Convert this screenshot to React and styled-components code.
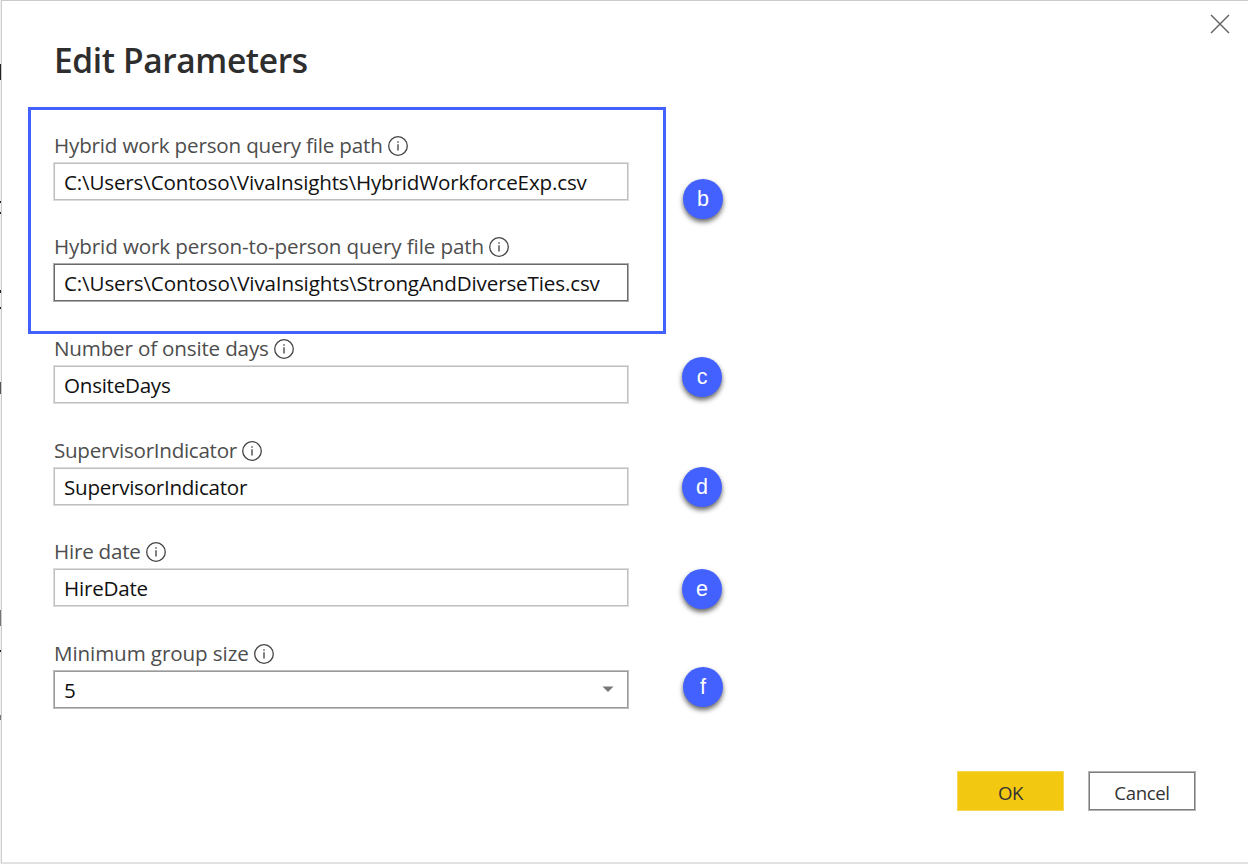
import React from "react";
import styled, { createGlobalStyle } from "styled-components";

const Global = createGlobalStyle`
  * { box-sizing: border-box; }
  body { margin: 0; background: #fff; font-family: "Open Sans", "Noto Sans", sans-serif; }
`;
const Page = styled.div`
  display: flex;
  position: relative;
  width: 1248px;
  height: 867px;
  overflow: hidden;
  background: #fff;
`;
const Backdrop = styled.div`
  width: 1px;
  height: 864px;
  background: #f0f0f0;
`;
const Fragment = styled.i`
  position: absolute;
  left: 0;
  width: 1px;
  top: ${(p) => p.$y}px;
  height: ${(p) => p.$h}px;
  background: ${(p) => p.$c || "#222"};
`;
const Dialog = styled.section`
  display: flex;
  flex-direction: column;
  flex: 1;
  height: 864px;
  border: solid #cbcbcb;
  border-width: 1px 0 2px 1px;
  border-bottom-color: #e1e1e1;
`;
const Header = styled.header`
  display: flex;
  justify-content: space-between;
  height: 106px;
  padding: 13px 18px 0 52px;
`;
const Title = styled.h1`
  margin: 23px 0 0;
  font-size: 33.5px;
  line-height: 47px;
  font-weight: 600;
  letter-spacing: -0.38px;
  color: #2e2e2e;
  white-space: nowrap;
`;
const CloseButton = styled.button`
  width: 20px;
  height: 20px;
  padding: 0;
  border: 0;
  background: none;
  svg { display: block; }
`;
const Body = styled.main`
  display: flex;
  flex: 1;
`;
const Form = styled.form`
  display: flex;
  flex-direction: column;
  width: 638px;
  margin-left: 26px;
`;
const Highlight = styled.fieldset`
  min-width: 0;
  height: 227px;
  margin: 0;
  padding: 21px 0 0 22px;
  border: 3px solid #4361ff;
`;
const Plain = styled.div`
  padding: 0 0 0 25px;
`;
const Field = styled.div`
  height: ${(p) => p.$h || 102}px;
`;
const Label = styled.label`
  display: flex;
  align-items: center;
  gap: 5px;
  height: 31px;
  padding: 0 0 2px 1px;
  font-size: 20.6px;
  color: #4d4d4d;
  white-space: nowrap;
  svg { flex: none; }
`;
const LabelText = styled.span`
  margin-top: -2px;
  letter-spacing: ${(p) => p.$ls || 0}px;
`;
const Box = styled.div`
  display: flex;
  align-items: center;
  justify-content: space-between;
  width: 576px;
  height: 39px;
  padding: 0 14px 0 10px;
  border: 1px solid ${(p) => p.$edge || "#dcdcdc"};
  box-shadow: inset 0 0 0 1px ${(p) => p.$c || "#bfbfbf"};
  font-size: 20.6px;
  color: #111;
  white-space: nowrap;
`;
const Value = styled.span`
  letter-spacing: ${(p) => p.$ls || 0}px;
`;
const Steps = styled.aside`
  width: 60px;
  padding: 72px 0 0 16px;
`;
const Step = styled.div`
  display: flex;
  align-items: center;
  justify-content: center;
  width: 40px;
  height: 40px;
  margin: 0 0 ${(p) => p.$gap || 0}px ${(p) => p.$x || 0}px;
  border-radius: 50%;
  background: #4361ff;
  color: #fff;
  font: 21.5px/40px "Liberation Sans", sans-serif;
  box-shadow: 0 3px 5px rgba(0, 0, 0, 0.6);
`;
const Footer = styled.footer`
  display: flex;
  justify-content: flex-end;
  gap: 24px;
  height: 91px;
  padding-right: 52px;
`;
const Button = styled.button`
  width: ${(p) => (p.$primary ? 107 : 108)}px;
  height: 40px;
  padding: 3px 0 0;
  border: 1px solid ${(p) => (p.$primary ? "#f5d85a" : "#b4b4b4")};
  box-shadow: inset 0 0 0 1px ${(p) => (p.$primary ? "#f2c811" : "#7d7d7d")};
  background: ${(p) => (p.$primary ? "#f2c811" : "#fff")};
  color: #333;
  font: 18.6px/30px "Open Sans", sans-serif;
  letter-spacing: -0.35px;
`;

const InfoIcon = () => (
  <svg width="20" height="20" viewBox="0 0 20 20">
    <circle cx="10" cy="10" r="9.3" fill="none" stroke="#444" strokeWidth="1.3" />
    <path d="M10 8.2v6.3M10 5.2v1.6" stroke="#555" strokeWidth="1.5" />
  </svg>
);

function Param({ label, value, ls, vls, color, edge, h, select }) {
  return (
    <Field $h={h}>
      <Label><LabelText $ls={ls}>{label}</LabelText><InfoIcon /></Label>
      <Box $c={color} $edge={edge}>
        <Value $ls={vls}>{value}</Value>
        {select && (
          <svg width="12" height="7" viewBox="0 0 12 7"><path d="M0.5 0.5h11L6 6z" fill="#777" /></svg>
        )}
      </Box>
    </Field>
  );
}

export default function App() {
  return (
    <Page>
      <Global />
      <Backdrop />
      <Dialog>
        <Header>
          <Title>Edit Parameters</Title>
          <CloseButton aria-label="Close">
            <svg width="20" height="20" viewBox="0 0 20 20">
              <path d="M1 1l18 18M19 1L1 19" stroke="#666" strokeWidth="1.5" />
            </svg>
          </CloseButton>
        </Header>
        <Body>
          <Form>
            <Highlight>
              <Param label="Hybrid work person query file path" ls={-0.17} value="C:\Users\Contoso\VivaInsights\HybridWorkforceExp.csv" vls={-0.16} h={101} />
              <Param label="Hybrid work person-to-person query file path" ls={-0.11} value="C:\Users\Contoso\VivaInsights\StrongAndDiverseTies.csv" vls={-0.14} color="#6a6a6a" edge="#adadad" />
            </Highlight>
            <Plain>
              <Param label="Number of onsite days" ls={-0.17} value="OnsiteDays" vls={-0.26} />
              <Param label="SupervisorIndicator" ls={-0.28} value="SupervisorIndicator" vls={-0.27} h={101} />
              <Param label="Hire date" ls={-0.22} value="HireDate" vls={-0.22} />
              <Param label="Minimum group size" ls={-0.1} value="5" color="#9a9a9a" edge="#bdbdbd" select />
            </Plain>
          </Form>
          <Steps>
            <Step $x={1} $gap={138}>b</Step>
            <Step $gap={70}>c</Step>
            <Step $gap={62}>d</Step>
            <Step $gap={58}>e</Step>
            <Step $x={1}>f</Step>
          </Steps>
        </Body>
        <Footer>
          <Button $primary>OK</Button>
          <Button>Cancel</Button>
        </Footer>
      </Dialog>
      <Fragment $y={64} $h={16} />
      <Fragment $y={201} $h={2} />
      <Fragment $y={212} $h={2} />
      <Fragment $y={290} $h={3} />
      <Fragment $y={307} $h={2} />
      <Fragment $y={382} $h={12} $c="#555" />
      <Fragment $y={610} $h={16} $c="#777" />
      <Fragment $y={650} $h={2} />
      <Fragment $y={715} $h={5} $c="#777" />
    </Page>
  );
}
